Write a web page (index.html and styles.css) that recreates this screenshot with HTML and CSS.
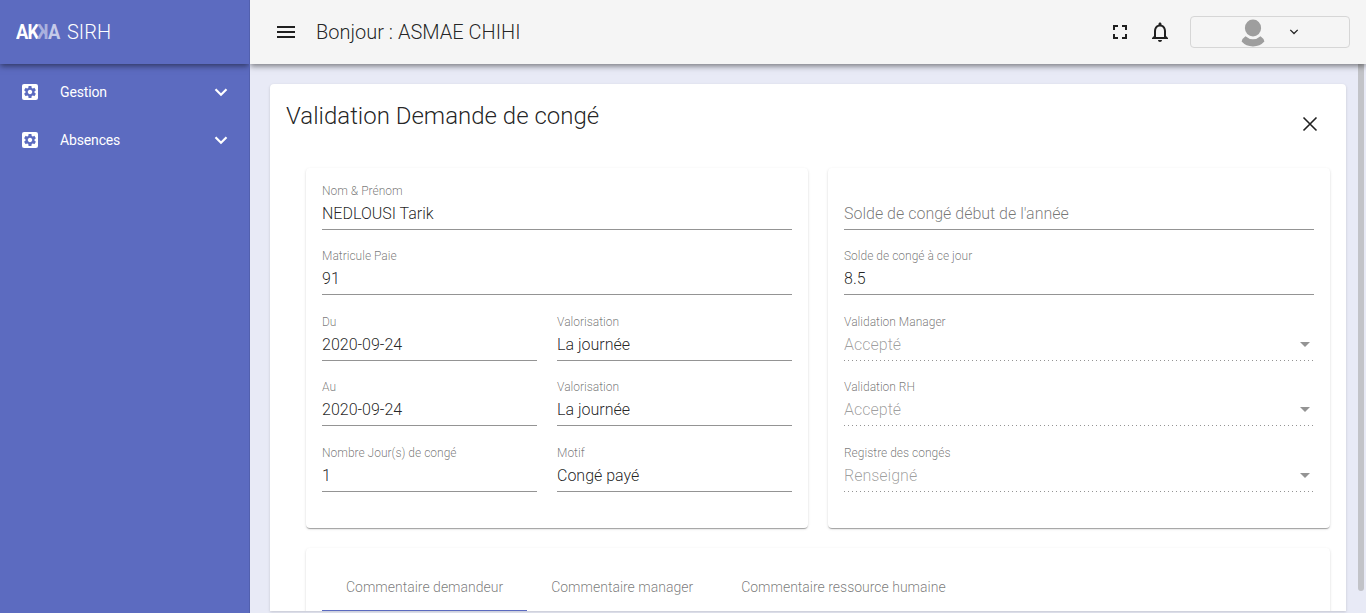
FILE: index.html
```html
<!DOCTYPE html>
<html lang="fr">
<head>
<meta charset="utf-8">
<title>SIRH</title>
<link rel="stylesheet" href="styles.css">
</head>
<body>
<div class="app">
  <aside class="sidebar">
    <div class="brand"><span class="logo"><span>AK</span><span class="logo-flip">K</span><span class="logo-dim">A</span></span><span class="brand-name">SIRH</span></div>
    <nav class="menu">
      <a class="menu-item">
        <svg class="menu-icon" viewBox="0 0 24 24"><rect x="2.400" y="2.400" width="19.200" height="19.200" rx="2.500"/><path id="gear" class="gear" transform="translate(3.120 3.120) scale(.74)" d="M19.140 12.940c.04-.3.060-.61.060-.94 0-.32-.02-.64-.07-.94l2.030-1.580c.18-.14.23-.41.120-.61l-1.920-3.320c-.12-.22-.37-.29-.59-.22l-2.390.96c-.5-.38-1.030-.7-1.620-.94l-.36-2.540c-.04-.24-.24-.41-.48-.41h-3.840c-.24 0-.43.170-.47.410l-.36 2.540c-.59.240-1.130.570-1.620.940l-2.390-.96c-.22-.08-.47 0-.59.220L2.740 8.870c-.12.210-.08.470.120.610l2.030 1.580c-.05.300-.09.630-.09.940s.02.640.070.940l-2.030 1.580c-.18.140-.23.410-.12.610l1.920 3.320c.12.220.37.290.59.220l2.390-.96c.5.380 1.030.7 1.620.94l.36 2.540c.05.240.24.410.48.410h3.840c.24 0 .44-.17.470-.41l.36-2.540c.59-.24 1.130-.56 1.620-.94l2.390.96c.22.080.47 0 .59-.22l1.920-3.320c.12-.22.070-.47-.12-.61l-2.010-1.580zM12 15.600c-1.980 0-3.600-1.620-3.600-3.600s1.620-3.600 3.600-3.600 3.600 1.620 3.600 3.600-1.620 3.600-3.600 3.600z"/></svg>
        <span class="menu-label">Gestion</span>
        <svg class="menu-arrow" viewBox="0 0 24 24"><path d="M6.500 9.200 12 14.700l5.500-5.500"/></svg>
      </a>
      <a class="menu-item">
        <svg class="menu-icon" viewBox="0 0 24 24"><rect x="2.400" y="2.400" width="19.200" height="19.200" rx="2.500"/><use href="#gear"/></svg>
        <span class="menu-label">Absences</span>
        <svg class="menu-arrow" viewBox="0 0 24 24"><path d="M6.500 9.200 12 14.700l5.500-5.500"/></svg>
      </a>
    </nav>
  </aside>
  <div class="main">
    <header class="topbar">
      <svg class="icon" viewBox="0 0 24 24"><path d="M3 18h18v-2H3v2zm0-5h18v-2H3v2zm0-7v2h18V6H3z"/></svg>
      <span class="greeting">Bonjour : ASMAE CHIHI</span>
      <svg class="icon" viewBox="0 0 24 24"><path d="M7 14H5v5h5v-2H7v-3zm-2-4h2V7h3V5H5v5zm12 7h-3v2h5v-5h-2v3zM14 5v2h3v3h2V5h-5z"/></svg>
      <svg class="icon bell" viewBox="0 0 24 24"><path d="M12 22c1.100 0 2-.9 2-2h-4c0 1.100.9 2 2 2zm6-6v-5c0-3.070-1.630-5.640-4.500-6.320V4c0-.83-.67-1.500-1.500-1.500s-1.500.67-1.500 1.500v.68C7.640 5.360 6 7.920 6 11v5l-2 2v1h16v-1l-2-2zm-2 1H8v-6c0-2.480 1.510-4.500 4-4.500s4 2.020 4 4.500v6z"/></svg>
      <button class="account">
        <svg class="avatar" viewBox="0 0 24 28"><ellipse cx="12" cy="9" rx="8.100" ry="8.500"/><path d="M4.500 17.200Q12 23.500 19.500 17.200Q22.500 19 23.400 22.600Q19 27.500 12 27.500T.6 22.600Q1.500 19 4.500 17.200z"/></svg>
        <svg class="account-arrow" viewBox="0 0 10 10"><path d="M1.300 2.900 5 6.500l3.700-3.600"/></svg>
      </button>
    </header>
    <div class="content">
      <section class="panel">
        <div class="panel-head">
          <h1>Validation Demande de congé</h1>
          <svg class="icon close" viewBox="0 0 24 24"><path d="M5.500 5.500l13 13m0-13l-13 13"/></svg>
        </div>
        <div class="cards">
          <div class="card">
            <div class="field"><label>Nom &amp; Prénom</label><div class="value">NEDLOUSI Tarik</div></div>
            <div class="field"><label>Matricule Paie</label><div class="value">91</div></div>
            <div class="pair">
              <div class="field"><label>Du</label><div class="value">2020-09-24</div></div>
              <div class="field"><label>Valorisation</label><div class="value">La journée</div></div>
            </div>
            <div class="pair">
              <div class="field"><label>Au</label><div class="value">2020-09-24</div></div>
              <div class="field"><label>Valorisation</label><div class="value">La journée</div></div>
            </div>
            <div class="pair">
              <div class="field"><label>Nombre Jour(s) de congé</label><div class="value">1</div></div>
              <div class="field"><label>Motif</label><div class="value">Congé payé</div></div>
            </div>
          </div>
          <div class="card">
            <div class="field"><label></label><div class="value placeholder">Solde de congé début de l'année</div></div>
            <div class="field"><label>Solde de congé à ce jour</label><div class="value">8.5</div></div>
            <div class="field disabled"><label>Validation Manager</label><div class="value">Accepté<i class="caret"></i></div></div>
            <div class="field disabled"><label>Validation RH</label><div class="value">Accepté<i class="caret"></i></div></div>
            <div class="field disabled"><label>Registre des congés</label><div class="value">Renseigné<i class="caret"></i></div></div>
          </div>
        </div>
        <div class="card comments">
          <div class="tabs">
            <div class="tab active">Commentaire demandeur</div>
            <div class="tab">Commentaire manager</div>
            <div class="tab">Commentaire ressource humaine</div>
          </div>
        </div>
      </section>
      <div class="scrollbar"></div>
    </div>
  </div>
</div>
</body>
</html>
```
FILE: styles.css
```css
* { box-sizing: border-box; }
body {
  margin: 0;
  font-family: Roboto, "Liberation Sans", sans-serif;
  font-weight: 300;
  color: rgba(0, 0, 0, .87);
  overflow: hidden;
}
.app { display: flex; height: 613px; background: #e8eaf6; }

.sidebar {
  width: 250px;
  flex: none;
  background: #5c6bc0;
  border-right: 1px solid #5260ae;
  color: #fff;
}
.brand {
  height: 64px;
  padding-left: 16px;
  display: flex;
  align-items: center;
  gap: 5px;
  font-size: 20px;
  box-shadow: 0 2px 6px rgba(0, 0, 0, .5);
  clip-path: inset(0 0 -12px 0);
}
.logo {
  width: 46px;
  display: flex;
  font: 700 21px/24px Roboto, sans-serif;
  letter-spacing: -1px;
  transform: scaleX(.87);
  transform-origin: left;
}
.logo-flip { transform: scaleX(-1); color: #a9b1de; }
.logo-dim { color: #c5cae9; margin-left: -1px; }
.menu { padding-top: 4px; }
.menu-item {
  height: 48px;
  padding: 0 16px 0 20px;
  display: flex;
  align-items: center;
  font-size: 14px;
  font-weight: 400;
  letter-spacing: -.15px;
}
.menu-icon { width: 20px; height: 20px; fill: #fff; }
.gear { fill: #5c6bc0; }
.menu-label { flex: 1; margin-left: 20px; }
.menu-arrow { width: 24px; height: 24px; fill: none; stroke: #fff; stroke-width: 2.200; }

.main { flex: 1; min-width: 0; display: flex; flex-direction: column; }
.topbar {
  height: 64px;
  flex: none;
  padding: 0 16px 0 24px;
  display: flex;
  align-items: center;
  background: #f5f5f5;
  box-shadow: 0 2px 6px rgba(0, 0, 0, .5);
  clip-path: inset(0 0 -12px 0);
  z-index: 1;
}
.icon { width: 24px; height: 24px; fill: rgba(0, 0, 0, .87); flex: none; }
.greeting { flex: 1; margin-left: 18px; font-size: 20px; }
.bell { margin: 0 18px 0 16px; }
.account {
  width: 160px;
  height: 32px;
  padding: 0;
  display: flex;
  justify-content: center;
  align-items: center;
  gap: 24px;
  border: 1px solid #d6d6d6;
  border-radius: 4px;
  background: transparent;
}
.avatar { width: 24px; height: 28px; margin-top: 2px; fill: #9e9e9e; }
.account-arrow { width: 10px; height: 10px; fill: none; stroke: #222; stroke-width: 1.300; }

.content { flex: 1; min-height: 0; display: flex; padding: 20px 2px 2px 20px; }
.panel {
  width: 1076px;
  flex: none;
  padding: 16px;
  overflow: hidden;
  background: #fff;
  border-radius: 4px 4px 0 0;
  box-shadow: 0 1px 3px rgba(0, 0, 0, .16);
}
.panel-head { height: 68px; display: flex; justify-content: space-between; }
h1 { margin: 0; font-size: 24px; line-height: 32px; font-weight: 300; }
.close { margin: 12px 8px 0 0; stroke: #212121; stroke-width: 1.600; }
.cards { display: flex; gap: 20px; margin-left: 20px; }
.card {
  flex: 1;
  height: 360px;
  padding: 16px;
  border-radius: 4px;
  background: #fff;
  box-shadow: 0 2px 1px -1px rgba(0, 0, 0, .2), 0 1px 1px rgba(0, 0, 0, .14), 0 1px 3px rgba(0, 0, 0, .12);
}
.pair { display: grid; grid-template-columns: 215px 235px; gap: 20px; }
.field { height: 65.400px; }
.field label {
  display: block;
  height: 14px;
  line-height: 14px;
  font-size: 12px;
  color: rgba(0, 0, 0, .54);
}
.value {
  height: 32px;
  padding-top: 7px;
  font-size: 16px;
  line-height: 18px;
  border-bottom: 1px solid #949494;
}
.placeholder { color: rgba(0, 0, 0, .54); }
.disabled .value {
  display: flex;
  justify-content: space-between;
  color: rgba(0, 0, 0, .38);
  border-bottom: 0;
  background: repeating-linear-gradient(to right, #949494 0 1px, transparent 1px 4px) bottom / 100% 1px no-repeat;
}
.caret {
  width: 0;
  height: 0;
  margin: 6px 4px 0 0;
  border: 5px solid transparent;
  border-top-color: #949494;
  border-bottom: 0;
}
.comments { margin: 20px 0 0 20px; height: 240px; }
.tabs { display: flex; height: 48px; }
.tab {
  padding: 0 24px;
  line-height: 46px;
  font-size: 14px;
  color: rgba(0, 0, 0, .54);
}
.active { height: 48px; box-shadow: inset 0 -2px #5c6bc0; }
.scrollbar {
  width: 6px;
  height: 527px;
  margin: -20px 0 0 auto;
  flex: none;
  border-radius: 0 0 3px 3px;
  background: #c2c3c8;
}
```
